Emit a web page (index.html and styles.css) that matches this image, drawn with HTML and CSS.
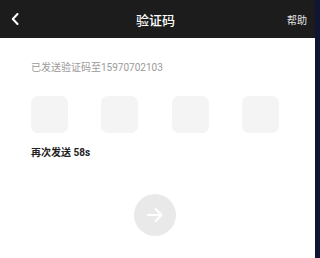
FILE: index.html
```html
<!DOCTYPE html>
<html lang="zh">
<head>
<meta charset="utf-8">
<link rel="stylesheet" href="styles.css">
</head>
<body>
<div class="page">
  <div class="main">
    <header class="bar">
      <div class="back">
        <svg width="8" height="12" viewBox="0 0 8 12"><path d="M6.5 1 L1.8 6 L6.5 11" fill="none" stroke="#fff" stroke-width="2" stroke-linecap="round" stroke-linejoin="round"/></svg>
      </div>
      <div class="title">验证码</div>
      <div class="help">帮助</div>
    </header>
    <section class="content">
      <p class="sent">已发送验证码至15970702103</p>
      <div class="codes">
        <div class="box"></div>
        <div class="box"></div>
        <div class="box"></div>
        <div class="box"></div>
      </div>
      <p class="resend">再次发送 58s</p>
      <div class="go-wrap">
        <div class="go">
          <svg width="18" height="16" viewBox="0 0 18 16"><path d="M2 8 H15.5 M9.5 2 L15.5 8 L9.5 14" fill="none" stroke="#fff" stroke-width="2.2" stroke-linecap="round" stroke-linejoin="round"/></svg>
        </div>
      </div>
    </section>
  </div>
  <div class="strip"></div>
</div>
</body>
</html>
```
FILE: styles.css
```css
html, body {
  margin: 0;
  padding: 0;
  background: #fff;
}
body {
  font-family: "Roboto", "Noto Sans CJK SC", sans-serif;
}
.page {
  display: flex;
  width: 320px;
  height: 258px;
  overflow: hidden;
}
.main {
  width: 315px;
  flex: none;
  display: flex;
  flex-direction: column;
}
.strip {
  flex: 1;
  background: #0f1532;
}
.bar {
  height: 38px;
  background: #1c1c1c;
  display: grid;
  grid-template-columns: 60px 1fr 60px;
  align-items: center;
  color: #fff;
}
.back {
  padding-left: 11px;
  display: flex;
  align-items: center;
}
.title {
  text-align: center;
  font-size: 13px;
  font-weight: 500;
  padding-right: 4px;
}
.help {
  text-align: right;
  padding-right: 8px;
  font-size: 10px;
  color: #e6e6e6;
}
.content {
  padding: 0 36px 0 31px;
}
.sent {
  margin: 23px 0 0;
  font-size: 10px;
  line-height: 14px;
  color: #9a9a9a;
}
.codes {
  margin-top: 21px;
  display: flex;
  justify-content: space-between;
}
.box {
  width: 37px;
  height: 37px;
  border-radius: 7px;
  background: #f4f4f4;
}
.resend {
  margin: 13px 0 0;
  font-size: 10px;
  line-height: 14px;
  font-weight: 700;
  color: #222;
}
.go-wrap {
  margin-top: 34px;
  display: flex;
  justify-content: center;
}
.go {
  width: 42px;
  height: 42px;
  border-radius: 50%;
  background: #e9e9e9;
  display: flex;
  align-items: center;
  justify-content: center;
}
```
